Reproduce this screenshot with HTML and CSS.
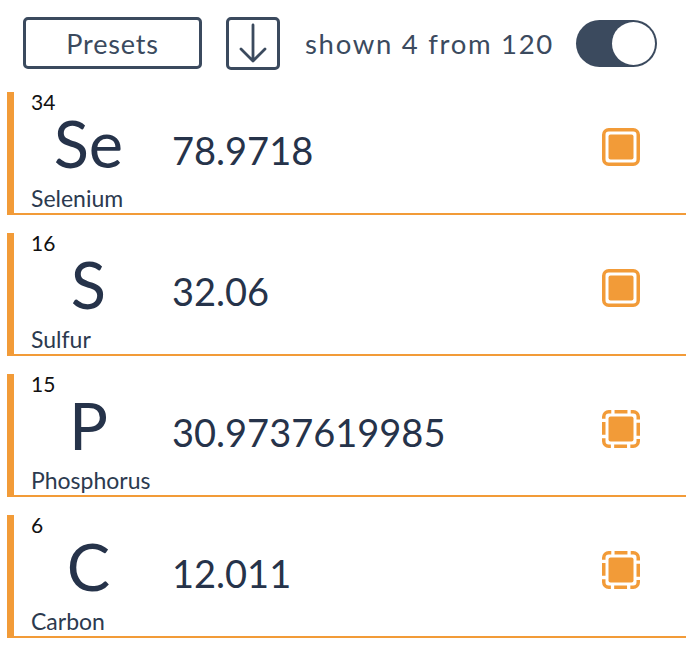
FILE: index.html
```html
<!DOCTYPE html>
<html>
<head>
<meta charset="utf-8">
<link rel="stylesheet" href="styles.css">
</head>
<body>
<div class="toolbar">
  <button class="presets">Presets</button>
  <button class="sort">
    <svg width="36" height="40" viewBox="0 0 36 40"><path d="M18 2 V38 M6 26 L18 38 L30 26" fill="none" stroke="#3b4a5e" stroke-width="2.8" stroke-linecap="round" stroke-linejoin="round"/></svg>
  </button>
  <span class="count">shown 4 from 120</span>
  <div class="toggle"><div class="knob"></div></div>
</div>
<div class="list">
  <div class="row">
    <div class="info"><div class="num">34</div><div class="sym">Se</div><div class="name">Selenium</div></div>
    <div class="mass">78.9718</div>
    <svg class="mark" viewBox="0 0 38 38"><rect x="1.75" y="1.75" width="34.5" height="34.5" rx="5" fill="none" stroke="#f29b38" stroke-width="3.5"/><rect x="6.5" y="6.5" width="25" height="25" rx="2" fill="#f29b38"/></svg>
  </div>
  <div class="row">
    <div class="info"><div class="num">16</div><div class="sym">S</div><div class="name">Sulfur</div></div>
    <div class="mass">32.06</div>
    <svg class="mark" viewBox="0 0 38 38"><rect x="1.75" y="1.75" width="34.5" height="34.5" rx="5" fill="none" stroke="#f29b38" stroke-width="3.5"/><rect x="6.5" y="6.5" width="25" height="25" rx="2" fill="#f29b38"/></svg>
  </div>
  <div class="row">
    <div class="info"><div class="num">15</div><div class="sym">P</div><div class="name">Phosphorus</div></div>
    <div class="mass">30.9737619985</div>
    <svg class="mark" viewBox="0 0 38 38"><rect x="1.75" y="1.75" width="34.5" height="34.5" rx="5" fill="none" stroke="#f29b38" stroke-width="3.5" stroke-dasharray="12.9 3.275" stroke-dashoffset="10.375"/><rect x="6.5" y="6.5" width="25" height="25" rx="2" fill="#f29b38"/></svg>
  </div>
  <div class="row">
    <div class="info"><div class="num">6</div><div class="sym">C</div><div class="name">Carbon</div></div>
    <div class="mass">12.011</div>
    <svg class="mark" viewBox="0 0 38 38"><rect x="1.75" y="1.75" width="34.5" height="34.5" rx="5" fill="none" stroke="#f29b38" stroke-width="3.5" stroke-dasharray="12.9 3.275" stroke-dashoffset="10.375"/><rect x="6.5" y="6.5" width="25" height="25" rx="2" fill="#f29b38"/></svg>
  </div>
</div>
</body>
</html>
```
FILE: styles.css
```css
html, body {
  margin: 0;
  padding: 0;
  background: #ffffff;
}
body {
  width: 686px;
  font-family: Lato, "Open Sans", sans-serif;
  color: #2c3a4f;
}
.toolbar {
  display: flex;
  align-items: center;
  padding: 17px 0 0 23px;
  height: 52px;
}
.presets {
  box-sizing: border-box;
  width: 179px;
  height: 52px;
  border: 3px solid #3b4a5e;
  border-radius: 5px;
  background: #fff;
  font-family: Lato, sans-serif;
  font-size: 27px;
  letter-spacing: 0.8px;
  color: #3b4a5e;
  padding: 0;
}
.sort {
  box-sizing: border-box;
  width: 54px;
  height: 53px;
  margin-left: 24px;
  border: 3px solid #3b4a5e;
  border-radius: 5px;
  background: #fff;
  padding: 0;
  display: flex;
  align-items: center;
  justify-content: center;
}
.count {
  margin-left: 25px;
  font-size: 27.5px;
  letter-spacing: 1.7px;
  color: #3b4a5e;
  white-space: nowrap;
}
.toggle {
  box-sizing: border-box;
  width: 81px;
  height: 47px;
  margin-left: auto;
  margin-right: 29px;
  border-radius: 24px;
  background: #3b4a5e;
  display: flex;
  justify-content: flex-end;
  align-items: center;
  padding-right: 2px;
}
.knob {
  width: 43px;
  height: 43px;
  border-radius: 50%;
  background: #fff;
}
.list {
  margin-top: 23px;
  display: flex;
  flex-direction: column;
  gap: 18px;
}
.row {
  margin-left: 7px;
  height: 121px;
  border-left: 7px solid #f29b38;
  border-bottom: 2px solid #f29b38;
  display: flex;
  align-items: flex-start;
  padding-left: 17px;
}
.info {
  width: 115px;
  display: flex;
  flex-direction: column;
}
.num {
  font-size: 21px;
  line-height: 20px;
  color: #111;
}
.sym {
  font-size: 65px;
  line-height: 62px;
  text-align: center;
  color: #26334a;
}
.name {
  margin-top: 11px;
  font-size: 23px;
  line-height: 26px;
  color: #2c3a4f;
  white-space: nowrap;
}
.mass {
  margin-left: 26px;
  margin-top: 39px;
  font-size: 38px;
  line-height: 38px;
  color: #26334a;
}
.mark {
  width: 38px;
  height: 38px;
  margin-left: auto;
  margin-right: 46px;
  margin-top: 36px;
}
```
